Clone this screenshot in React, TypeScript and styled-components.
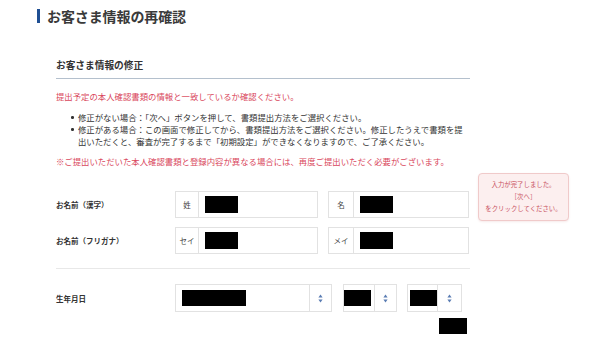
import React from "react";
import styled, { createGlobalStyle } from "styled-components";

const GlobalStyle = createGlobalStyle`
  html, body { margin: 0; padding: 0; background: #ffffff; }
  body {
    font-family: "Noto Sans CJK JP", "Noto Sans", sans-serif;
    color: #333333;
  }
  * { box-sizing: border-box; }
`;

const Page = styled.div`
  padding: 9px 0 0 37px;
  width: 600px;
  height: 344px;
  overflow: hidden;
`;

const Title = styled.h1`
  margin: 0;
  border-left: 3px solid #1f4f93;
  padding-left: 7px;
  height: 14px;
  font-size: 14px;
  line-height: 14px;
  font-weight: 700;
  color: #3a3a3a;
  letter-spacing: -0.1px;
`;

const Section = styled.section`
  margin: 35px 0 0 19px;
  width: 414px;
`;

const SectionHeading = styled.h2`
  margin: 0;
  font-size: 9.7px;
  line-height: 14px;
  font-weight: 700;
  color: #333;
  padding-bottom: 6px;
  border-bottom: 1px solid #b4c0cd;
`;

const Notice = styled.p<{ $mt: number }>`
  margin: ${(p) => p.$mt}px 0 0;
  font-size: 8.4px;
  line-height: 12px;
  color: #d9475c;
  white-space: nowrap;
`;

const List = styled.ul`
  margin: 9px 0 0;
  padding: 0 0 0 13px;
  list-style: none;
  width: 414px;
`;

const Item = styled.li`
  display: grid;
  grid-template-columns: 9px 1fr;
  font-size: 8.4px;
  line-height: 12px;
  color: #333;
`;

const Bullet = styled.span`
  display: flex;
  justify-content: flex-start;
  padding: 5px 0 0 2px;
  &::after {
    content: "";
    width: 2.5px;
    height: 2.5px;
    border-radius: 50%;
    background: #333;
  }
`;

const Form = styled.div`
  position: relative;
  margin-top: 24px;
`;

const Row = styled.div<{ $h: number; $mt?: number }>`
  display: grid;
  grid-template-columns: 119px 1fr;
  align-items: center;
  min-height: ${(p) => p.$h}px;
  margin-top: ${(p) => p.$mt ?? 0}px;
`;

const Label = styled.div`
  font-size: 7.5px;
  font-weight: 700;
  color: #333;
`;

const Fields = styled.div`
  display: flex;
  align-items: center;
  gap: 10px;
`;

const InputBox = styled.div<{ $w: number }>`
  display: flex;
  align-items: stretch;
  width: ${(p) => p.$w}px;
  height: 27px;
  border: 1px solid #e2e2e2;
  background: #fff;
`;

const Prefix = styled.div<{ $w: number }>`
  width: ${(p) => p.$w}px;
  display: flex;
  align-items: center;
  justify-content: center;
  font-size: 7.5px;
  color: #444;
  border-right: 1px solid #e2e2e2;
`;

const Value = styled.div`
  flex: 1;
  display: flex;
  align-items: center;
  padding-left: 6px;
`;

const Redacted = styled.div<{ $w: number; $h: number }>`
  width: ${(p) => p.$w}px;
  height: ${(p) => p.$h}px;
  background: #000;
`;

const Separator = styled.hr`
  margin: 14px 0 0;
  border: 0;
  border-top: 1px solid #e8e8e8;
  width: 414px;
`;

const SelectBox = styled.div<{ $w: number; $arrow: number; $ml?: number }>`
  display: grid;
  grid-template-columns: 1fr ${(p) => p.$arrow}px;
  width: ${(p) => p.$w}px;
  height: 28px;
  margin-left: ${(p) => p.$ml ?? 0}px;
  border: 1px solid #e2e2e2;
  background: #fff;
`;

const SelectValue = styled.div<{ $pl: number }>`
  display: flex;
  align-items: center;
  padding-left: ${(p) => p.$pl}px;
  border-right: 1px solid #e2e2e2;
`;

const ArrowCell = styled.div`
  display: flex;
  align-items: center;
  justify-content: center;
`;

const BelowDay = styled.div`
  margin: 6px 0 0 264px;
`;

const Tooltip = styled.div`
  position: absolute;
  left: 422px;
  top: -18px;
  width: 91px;
  height: 48px;
  padding-top: 5px;
  background: #fcefef;
  border: 1px solid #f0caca;
  border-radius: 4px;
  box-shadow: 0 1px 2px rgba(200, 120, 120, 0.15);
  text-align: center;
  font-size: 6.4px;
  line-height: 12px;
  color: #c9525f;
  white-space: nowrap;
`;

const Arrows = () => (
  <svg width="5" height="9" viewBox="0 0 5 9">
    <path d="M2.5 0.5 L4.6 3.6 H0.4 Z" fill="#5a7db3" />
    <path d="M2.5 8.5 L4.6 5.4 H0.4 Z" fill="#5a7db3" />
  </svg>
);

export default function App() {
  return (
    <>
      <GlobalStyle />
      <Page>
        <Title>お客さま情報の再確認</Title>
        <Section>
          <SectionHeading>お客さま情報の修正</SectionHeading>
          <Notice $mt={11}>提出予定の本人確認書類の情報と一致しているか確認ください。</Notice>
          <List>
            <Item>
              <Bullet />
              <span>修正がない場合：「次へ」ボタンを押して、書類提出方法をご選択ください。</span>
            </Item>
            <Item>
              <Bullet />
              <span>
                修正がある場合：この画面で修正してから、書類提出方法をご選択ください。修正したうえで書類を提
                <br />
                出いただくと、審査が完了するまで「初期設定」ができなくなりますので、ご了承ください。
              </span>
            </Item>
          </List>
          <Notice $mt={8}>
            ※ご提出いただいた本人確認書類と登録内容が異なる場合には、再度ご提出いただく必要がございます。
          </Notice>

          <Form>
            <Tooltip>
              入力が完了しました。
              <br />［次へ］
              <br />
              をクリックしてください。
            </Tooltip>
            <Row $h={27}>
              <Label>お名前（漢字）</Label>
              <Fields>
                <InputBox $w={143}>
                  <Prefix $w={23}>姓</Prefix>
                  <Value>
                    <Redacted $w={33} $h={17} />
                  </Value>
                </InputBox>
                <InputBox $w={141}>
                  <Prefix $w={25}>名</Prefix>
                  <Value>
                    <Redacted $w={33} $h={17} />
                  </Value>
                </InputBox>
              </Fields>
            </Row>
            <Row $h={27} $mt={9}>
              <Label>お名前（フリガナ）</Label>
              <Fields>
                <InputBox $w={143}>
                  <Prefix $w={23}>セイ</Prefix>
                  <Value>
                    <Redacted $w={33} $h={17} />
                  </Value>
                </InputBox>
                <InputBox $w={141}>
                  <Prefix $w={25}>メイ</Prefix>
                  <Value>
                    <Redacted $w={33} $h={17} />
                  </Value>
                </InputBox>
              </Fields>
            </Row>
            <Separator />
            <Row $h={28} $mt={15}>
              <Label>生年月日</Label>
              <Fields>
                <SelectBox $w={157} $arrow={21}>
                  <SelectValue $pl={6}>
                    <Redacted $w={64} $h={16} />
                  </SelectValue>
                  <ArrowCell>
                    <Arrows />
                  </ArrowCell>
                </SelectBox>
                <SelectBox $w={54} $arrow={21} $ml={1}>
                  <SelectValue $pl={0}>
                    <Redacted $w={27} $h={16} />
                  </SelectValue>
                  <ArrowCell>
                    <Arrows />
                  </ArrowCell>
                </SelectBox>
                <SelectBox $w={55} $arrow={23}>
                  <SelectValue $pl={2}>
                    <Redacted $w={27} $h={16} />
                  </SelectValue>
                  <ArrowCell>
                    <Arrows />
                  </ArrowCell>
                </SelectBox>
              </Fields>
            </Row>
            <Row $h={0}>
              <span />
              <BelowDay>
                <Redacted $w={28} $h={16} />
              </BelowDay>
            </Row>
          </Form>
        </Section>
      </Page>
    </>
  );
}
